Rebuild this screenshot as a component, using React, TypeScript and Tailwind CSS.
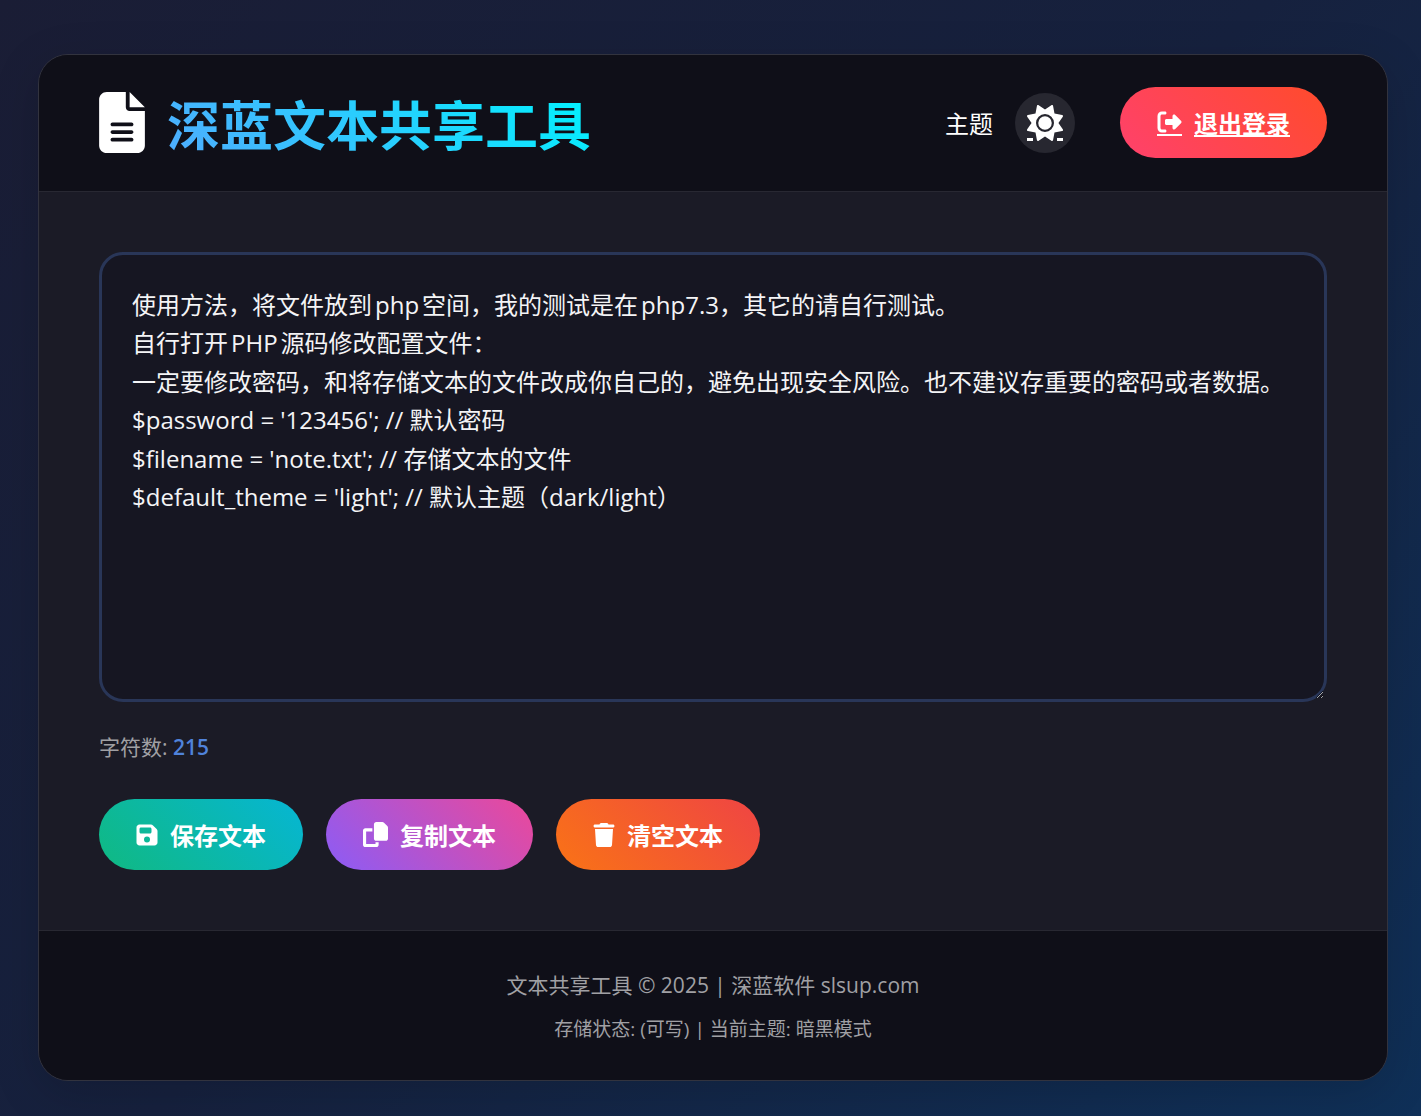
import { useState } from 'react';
import { FaFileLines, FaFloppyDisk, FaRightFromBracket, FaTrash } from 'react-icons/fa6';

const DEFAULT_TEXT = `使用方法，将文件放到php空间，我的测试是在php7.3，其它的请自行测试。
自行打开PHP源码修改配置文件：
一定要修改密码，和将存储文本的文件改成你自己的，避免出现安全风险。也不建议存重要的密码或者数据。
$password = '123456'; // 默认密码
$filename = 'note.txt'; // 存储文本的文件
$default_theme = 'light'; // 默认主题（dark/light）`;

function CopyIcon() {
  return (
    <svg className="h-[25px] w-[25px]" viewBox="0 0 512 512" fill="currentColor" aria-hidden="true">
      <path d="M272 0H396.1c12.7 0 24.9 5.1 33.9 14.1l67.9 67.9c9 9 14.1 21.2 14.1 33.9V336c0 26.5-21.5 48-48 48H272c-26.5 0-48-21.5-48-48V48c0-26.5 21.5-48 48-48zM48 128H192v64H64V448H256V416h64v48c0 26.5-21.5 48-48 48H48c-26.5 0-48-21.5-48-48V176c0-26.5 21.5-48 48-48z" />
    </svg>
  );
}

function SunIcon() {
  return (
    <svg className="h-9 w-9" viewBox="0 0 512 512" fill="currentColor" aria-hidden="true">
      <path d="M361.5 1.2c5 2.1 8.6 6.6 9.6 11.9L391 121l107.9 19.8c5.3 1 9.8 4.6 11.9 9.6s1.5 10.7-1.6 15.2L446.9 256l62.3 90.3c3.1 4.5 3.7 10.2 1.6 15.2s-6.6 8.6-11.9 9.6L391 391 371.1 498.9c-1 5.3-4.6 9.8-9.6 11.9s-10.7 1.5-15.2-1.6L256 446.9l-90.3 62.3c-4.5 3.1-10.2 3.7-15.2 1.6s-8.6-6.6-9.6-11.9L121 391 13.1 371.1c-5.3-1-9.8-4.6-11.9-9.6s-1.5-10.7 1.6-15.2L65.1 256 2.8 165.7c-3.1-4.5-3.7-10.2-1.6-15.2s6.6-8.6 11.9-9.6L121 121 140.9 13.1c1-5.3 4.6-9.8 9.6-11.9s10.7-1.5 15.2 1.6L256 65.1 346.3 2.8c4.5-3.1 10.2-3.7 15.2-1.6zM160 256a96 96 0 1 1 192 0 96 96 0 1 1 -192 0zm224 0a128 128 0 1 0 -256 0 128 128 0 1 0 256 0z" />
      <path d="M0 470h85v42H0zM427 470h85v42h-85z" />
    </svg>
  );
}

export default function App() {
  const [text, setText] = useState(DEFAULT_TEXT);

  const buttonClass =
    'flex h-[71px] items-center gap-3 rounded-full px-[37px] text-2xl font-bold text-white cursor-pointer';

  return (
    <div className="min-h-screen bg-linear-135/srgb from-[#1a1d35] via-[#16213e] to-[#0f3058] pt-[54px] pr-[33px] pb-[35px] pl-[38px] font-['Open_Sans','Noto_Sans_CJK_SC',sans-serif] text-white">
      <div className="mx-auto max-w-[1350px] overflow-hidden rounded-[30px] border border-[#32333e] bg-[#1b1b26] shadow-[0_12px_48px_rgba(0,0,0,0.15)]">
        <header className="flex items-center justify-between border-b border-[#282832] bg-[#0f0f18] px-[60px] pt-8 pb-[33px]">
          <div className="flex items-center gap-[22px]">
            <FaFileLines className="h-[61px] w-[46px]" />
            <h1 className="bg-linear-45/srgb from-[#4facfe] to-[#00f2fe] bg-clip-text pt-[7px] text-[53px] leading-[64px] font-bold text-transparent">
              深蓝文本共享工具
            </h1>
          </div>
          <div className="flex items-center gap-[45px]">
            <div className="flex items-center gap-[22px]">
              <span className="pt-0.5 text-2xl">主题</span>
              <a
                href="#theme"
                title="切换主题"
                className="flex h-[60px] w-[60px] items-center justify-center rounded-full bg-[#272730]"
              >
                <SunIcon />
              </a>
            </div>
            <a
              href="#logout"
              className="flex h-[71px] items-center gap-3 rounded-full bg-linear-45/srgb from-[#ff416c] to-[#ff4b2b] px-[37px] text-2xl font-bold"
            >
              <span className="border-b-2 border-white">
                <FaRightFromBracket className="h-6 w-[25px]" />
              </span>
              <span className="pt-0.5 underline">退出登录</span>
            </a>
          </div>
        </header>

        <main className="px-[60px] py-[60px]">
          <textarea
            aria-label="文本内容"
            spellCheck={false}
            value={text}
            onChange={(e) => setText(e.target.value)}
            className="block h-[450px] w-full resize-y rounded-3xl border-3 border-[#293658] bg-[#161622] px-[30px] pt-[31px] pb-[30px] text-2xl leading-[1.6] text-[#f4f4f6] outline-none [text-autospace:normal]"
          />
          <p className="mt-7 text-[21px] leading-[34px] text-[#a0a0a4]">
            字符数: <span className="font-semibold text-[#5083db]">215</span>
          </p>
          <div className="mt-[35px] flex flex-wrap gap-[23px]">
            <button type="button" className={`${buttonClass} bg-linear-45/srgb from-[#10b981] to-[#06b6d4]`}>
              <FaFloppyDisk className="h-6 w-[22px]" />
              <span className="pt-0.5">保存文本</span>
            </button>
            <button
              type="button"
              onClick={() => navigator.clipboard.writeText(text)}
              className={`${buttonClass} bg-linear-45/srgb from-[#8b5cf6] to-[#ec4899]`}
            >
              <CopyIcon />
              <span className="pt-0.5">复制文本</span>
            </button>
            <button
              type="button"
              onClick={() => setText('')}
              className={`${buttonClass} bg-linear-45/srgb from-[#f97316] to-[#ef4444]`}
            >
              <FaTrash className="h-6 w-[22px]" />
              <span className="pt-0.5">清空文本</span>
            </button>
          </div>
        </main>

        <footer className="border-t border-[#282832] bg-[#0f0f18] px-[60px] pt-[37px] pb-[35px] text-center text-[#a0a0a4]">
          <p className="text-[21px] leading-[34px]">文本共享工具 © 2025 | 深蓝软件 slsup.com</p>
          <p className="mt-3 text-[19px] leading-[31px]">存储状态: (可写) | 当前主题: 暗黑模式</p>
        </footer>
      </div>
    </div>
  );
}
